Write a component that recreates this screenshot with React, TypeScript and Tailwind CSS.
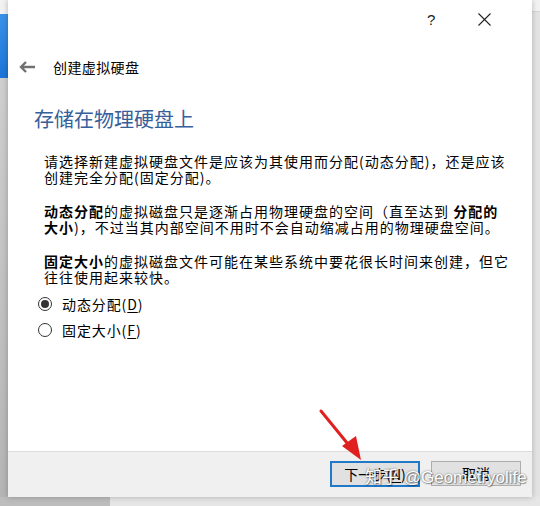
import React from "react";

const cjk = { fontFamily: '"Noto Sans CJK SC", "Noto Sans", sans-serif' };

function Radio({ checked, label, k }: { checked: boolean; label: string; k: string }) {
  return (
    <div className="flex h-[20px] items-center">
      <div className="ml-[1px] flex h-[14px] w-[14px] items-center justify-center rounded-full border border-[#333333] bg-white">
        {checked && <div className="h-[8px] w-[8px] rounded-full bg-[#333333]" />}
      </div>
      <span className="ml-[10px] text-[14px] leading-[16px] tracking-[0.9px] text-black">
        {label}(<span className="underline underline-offset-2">{k}</span>)
      </span>
    </div>
  );
}

export default function App() {
  return (
    <div className="relative flex h-[506px] w-[540px] flex-col overflow-hidden bg-[#e6e6e6]" style={cjk}>
      <div className="flex h-[497px]">
        {/* left desktop strip */}
        <div className="flex w-[8px] flex-col">
          <div className="h-[14px] bg-[#f2f2f2]" />
          <div className="h-[64px] bg-gradient-to-b from-[#3b92ea] to-[#1b74d8]" />
          <div className="flex-1 bg-gradient-to-b from-[#cfcfcf] to-[#b5b5b5]" />
        </div>

        {/* dialog */}
        <div className="relative z-10 flex w-[524px] flex-col bg-white shadow-[0_0_6px_rgba(0,0,0,0.25)]">
          <div className="flex h-[38px] items-center">
            <span className="ml-[419px] text-[15px] leading-none text-[#222]" style={{ fontFamily: '"Liberation Sans", sans-serif' }}>?</span>
            <svg className="ml-[43px]" width="13" height="13" viewBox="0 0 13 13">
              <path d="M0.5 0.5 L12.5 12.5 M12.5 0.5 L0.5 12.5" stroke="#222" strokeWidth="1.1" />
            </svg>
          </div>

          <div className="flex h-[58px] items-center">
            <svg className="ml-[11px]" width="16" height="12" viewBox="0 0 16 12">
              <path d="M16 6 H2.5 M7 1 L2 6 L7 11" stroke="#707070" strokeWidth="2.4" fill="none" />
            </svg>
            <span className="ml-[18px] text-[14px] tracking-[0.4px] text-black">创建虚拟硬盘</span>
          </div>

          <div className="ml-[26px] mt-[9px] text-[20px] leading-[28px] text-[#36609a]">存储在物理硬盘上</div>

          <div className="ml-[36px] mt-[20px] flex flex-col gap-[18px] whitespace-nowrap text-[14px] leading-[16px] tracking-[1px] text-black">
            <p>
              请选择新建虚拟硬盘文件是应该为其使用而分配(动态分配)，还是应该
              <br />
              创建完全分配(固定分配)。
            </p>
            <p>
              <b>动态分配</b>的虚拟磁盘只是逐渐占用物理硬盘的空间（直至达到 <b>分配的</b>
              <br />
              <b>大小</b>)，不过当其内部空间不用时不会自动缩减占用的物理硬盘空间。
            </p>
            <p>
              <b>固定大小</b>的虚拟磁盘文件可能在某些系统中要花很长时间来创建，但它
              <br />
              往往使用起来较快。
            </p>
          </div>

          <div className="ml-[29px] mt-[9px] flex flex-col gap-[6px]">
            <Radio checked label="动态分配" k="D" />
            <Radio checked={false} label="固定大小" k="F" />
          </div>

          <div className="mt-auto flex h-[46px] justify-end gap-[11px] border-t border-[#dcdcdc] bg-[#f0f0f0] pr-[11px] pt-[9px]">
            <div className="flex h-[26px] w-[90px] items-center justify-center border-2 border-[#1f78c8] bg-[#e1e1e1] text-[14px] text-black">
              下一步(<span className="underline underline-offset-2">N</span>)
            </div>
            <div className="flex h-[25px] w-[90px] items-center justify-center border border-[#adadad] bg-[#e1e1e1] text-[14px] text-black">
              取消
            </div>
          </div>
        </div>

        {/* right desktop strip */}
        <div className="flex w-[8px] flex-col">
          <div className="h-[12px] border-b border-[#d6d6d6] bg-[#f3f3f3]" />
          <div className="flex-1 bg-[#e4e4e4]" />
        </div>
      </div>

      {/* bottom desktop strip */}
      <div className="flex flex-1">
        <div className="w-[110px] bg-[#bdbdbd]" />
        <div className="flex-1 bg-[#e6e6e6]" />
      </div>

      {/* red annotation arrow */}
      <svg className="pointer-events-none absolute left-0 top-0 z-20" width="540" height="506" viewBox="0 0 540 506">
        <path d="M321 411 L352 449" stroke="#e02020" strokeWidth="3" strokeLinecap="round" />
        <path d="M361 460 L342 446 L356 436 Z" fill="#e02020" />
      </svg>

      {/* watermark */}
      <div
        className="pointer-events-none absolute left-[365px] top-[468px] z-30 whitespace-nowrap text-[17px] leading-[20px] text-white"
        style={{ fontFamily: '"Liberation Sans", "Noto Sans CJK SC", sans-serif', textShadow: "0 0 2px rgba(0,0,0,0.55), 1px 1px 1px rgba(0,0,0,0.35)" }}
      >
        知乎 @Geometryolife
      </div>
    </div>
  );
}
